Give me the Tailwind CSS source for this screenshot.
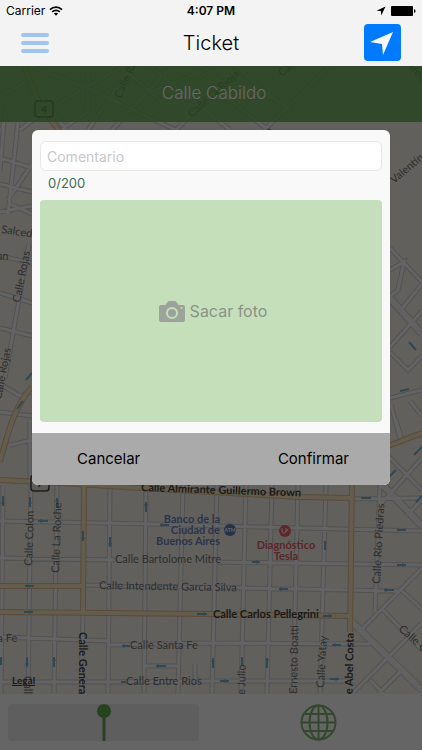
<!DOCTYPE html>
<html lang="es">
<head>
  <meta charset="UTF-8" />
  <meta name="viewport" content="width=device-width, initial-scale=1.0" />
  <title>Ticket</title>
  <script src="https://cdn.jsdelivr.net/npm/@tailwindcss/browser@4"></script>
</head>
<body class="bg-[#fcfcfc] font-['Inter','Liberation_Sans',sans-serif] text-black">
  <div class="min-h-screen flex flex-col">

    <!-- Status bar + nav bar -->
    <header class="bg-[#f3f3f3]">
      <div class="h-[22px] grid grid-cols-3 items-center px-[6px] text-xs">
        <div class="flex items-center gap-1">
          <span>Carrier</span>
          <svg class="w-[14px] h-[10px]" viewBox="0 0 14 10" fill="none" stroke="#000" stroke-width="1.7">
            <path d="M1 3.600C4.400 0.300 9.600 0.300 13 3.600" />
            <path d="M3.200 5.800C5.300 3.800 8.700 3.800 10.800 5.800" />
            <path d="M7 9.800L4.900 7.600C6.100 6.500 7.900 6.500 9.100 7.600Z" fill="#000" stroke="none" />
          </svg>
        </div>
        <span class="text-center font-semibold">4:07 PM</span>
        <div class="flex items-center justify-end gap-[5px]">
          <svg class="w-[10px] h-[10px]" viewBox="0 0 10 10"><path d="M9.500 0.500L0.500 4.700L4.900 5.100L5.300 9.500Z" /></svg>
          <svg class="w-[25px] h-[10px]" viewBox="0 0 25 10"><rect width="22" height="10" rx="1" /><path d="M23 3.200C25 3.200 25 6.800 23 6.800Z" /></svg>
        </div>
      </div>
      <nav class="h-11 grid grid-cols-3 items-center px-[21px] pb-[3px]">
        <button type="button" aria-label="Menú" class="w-7 flex flex-col gap-1">
          <span class="h-1 w-full rounded-full bg-[#9fc6f3]"></span>
          <span class="h-1 w-full rounded-full bg-[#9fc6f3]"></span>
          <span class="h-1 w-full rounded-full bg-[#9fc6f3]"></span>
        </button>
        <h1 class="text-center text-xl font-light">Ticket</h1>
        <button type="button" aria-label="Mi ubicación" class="justify-self-end w-[37px] h-[37px] rounded bg-[#007aff]">
          <svg viewBox="0 0 37 37"><path d="M29 8L6 18L18 20L19 31Z" fill="#f7f7f7" /></svg>
        </button>
      </nav>
    </header>

    <div class="relative grow flex flex-col">
      <main class="relative grow min-h-[628px] overflow-hidden bg-[#f5f0e7]">
        <svg class="absolute inset-0 w-full h-full" viewBox="0 66 422 628" preserveAspectRatio="xMidYMin slice" fill="none">
          <defs>
            <path id="streets" d="M0 521L150 524L260 527L422 531M0 558L115 560M211 562L422 565M84 585L300 589L400 591M0 637L110 641M110 645L211 643L370 644M0 682L110 682L200 681L355 681M145 666H180M195 664V681
              M3 485L1 694M31 485L28 694M57 485L54 694M110 485L108 694M146 485L144 694M183 485L178 694M217 485L212 694M246 485L241 694M272 485L267 694M298 485L293 694M326 485L320 694M380 485L375 612M83 613L81 694
              M360 631L422 568M354 692L422 623M382 609L422 650M402 591L422 609M370 680L384 694M400 672L378 694M352 499L422 498
              M380 505L422 458M396 420L403 444M384 452L422 490M407 515L422 500
              M390 248L422 282M390 270L404 262L398 290L390 296M400 311L422 284M390 347L422 311M390 352L408 370L422 356M390 398L422 390M391 405L400 438M410 401L422 416
              M4 122L0 170M0 158L32 168M18 122L8 214M0 184L32 192M10 204L32 214M32 164L8 200M0 256L32 263M29 244L5 378M0 293L32 303M0 328L32 336M0 384L20 396L32 392M0 412L32 416M30 422L30 484M0 212L32 206M10 445L32 440
              M88 66V112L60 130M30 66L88 88L150 118L176 130M88 86L125 66M88 86L38 116L20 130M132 66L88 130M0 96L30 80L66 130M172 66L112 130M240 66L176 130M272 100L236 66M150 66L230 130M150 92L215 66M330 66L264 130M250 80L290 110M8 104L2 130M186 66L268 130M120 66L160 100" />
            <path id="avenues" d="M352 622L422 690M376 478L422 526M388 296L422 334" />
            <path id="main-roads" d="M0 480L60 483L140 488L300 497L352 498M84 485L83 613M352 480L350 632M0 586H82M0 612L211 614L350 616M32 387C14 405 6 440 0 462M388 446L422 433M24 66L40 105L60 132" />
          </defs>
          <!-- casing first, then the road surface -->
          <use href="#streets" stroke="#cfcbcc" stroke-width="5" />
          <use href="#avenues" stroke="#cfcbcc" stroke-width="8" />
          <use href="#streets" stroke="#f8f7fb" stroke-width="3" />
          <use href="#avenues" stroke="#f3f2f6" stroke-width="6" />
          <use href="#main-roads" stroke="#e3b994" stroke-width="6" />
          <use href="#main-roads" stroke="#f4e9bd" stroke-width="4" />
          <!-- one-way arrows -->
          <g stroke="#78b4cc">
            <path d="M25 586h9M24 612h9M38 521h10M160 525h9M197 614h10M122 646h8M156 666h10M121 682h5M252 562h8M279 589h9M397 565h9M384 590h10M323 616h9M332 645h9M220 681h9M330 679h9M361 498h10M397 530h9M3 496v10M30 497v10M57 498v10M83 531v10M110 537v10M146 502v10M27 657v10M54 657v10M1 657v8M213 658v10M267 658v10M242 657v8M325 541v9M416 350l-7 -8M400 391l9 -2M388 478l8 -8M414 455l8 -8M416 502l6 -6M26 380l6 -7M17 409l6 -8M48 147l9 -3" stroke-width="2" />
            <path d="M41 519v4M162 523v4M28 584v4M30 610v4M204 612v4M124 644v4M158 664v4M257 560v4M281 587v4M403 563v4M386 588v4M329 614v4M335 643v4M225 679v4M336 677v4M1 503h4M28 503h4M55 501h4M81 538h4M108 544h4M144 505h4M25 664h4M52 660h4M211 661h4M265 660h4" />
          </g>
          <!-- route shields -->
          <g stroke="#4b4b4b" stroke-width="1.5">
            <rect x="35" y="101" width="18" height="16" rx="3" fill="#e8e6dc" />
            <rect x="31" y="475" width="18" height="16" rx="3" fill="#e8e6dc" />
          </g>
          <!-- street names -->
          <g class="font-['Lato','Open_Sans',sans-serif]" fill="#757575" font-size="11">
            <text x="41" y="113" font-size="10" font-weight="700" fill="#333">4</text>
            <text x="37" y="487" font-size="10" font-weight="700" fill="#333">7</text>
            <text transform="translate(121 99) rotate(-66)">Calle Rawson</text>
            <text transform="translate(192 118) rotate(-42)">Calle La Rioja</text>
            <text transform="translate(282 77) rotate(-40)">Calle</text>
            <text transform="translate(408 66) rotate(50)">Trenque</text>
            <text transform="translate(273 131) rotate(-45)" text-anchor="end">Cabildo</text>
            <text transform="translate(394 184) rotate(-40)">Valentín Gómez</text>
            <text transform="translate(1 233) rotate(8)">Salcedo</text>
            <text x="-9" y="260">San</text>
            <text transform="translate(20 303) rotate(-79)">Calle Rojas</text>
            <text transform="translate(1 400) rotate(-79)">Calle Rojas</text>
            <text transform="translate(32 566) rotate(-88)">Calle Colon</text>
            <text transform="translate(59 573) rotate(-88)">Calle La Roche</text>
            <text x="115" y="563">Calle Bartolome Mitre</text>
            <text transform="translate(99 589) rotate(1)">Calle Intendente Garcia Silva</text>
            <text x="-24" y="642">Santa Fe</text>
            <text x="130" y="649">Calle Santa Fe</text>
            <text x="126" y="685">Calle Entre Rios</text>
            <text transform="translate(24 676) rotate(90)">Calle</text>
            <text transform="translate(245 695) rotate(-89)">e Julio</text>
            <text transform="translate(297 694) rotate(-89)">Ernesto Boatti</text>
            <text transform="translate(324 688) rotate(-87)">Calle Yatay</text>
            <text transform="translate(380 584) rotate(-87)">Calle Rio Piedras</text>
            <text transform="translate(398 630) rotate(41)">Calle Castelli</text>
          </g>
          <g class="font-['Lato','Open_Sans',sans-serif]" fill="#484848" font-size="11" font-weight="700">
            <text transform="translate(141 491) rotate(2)">Calle Almirante Guillermo Brown</text>
            <text x="213" y="618">Calle Carlos Pellegrini</text>
            <text transform="translate(79 632) rotate(90)">Calle General Paz</text>
            <text transform="translate(352 726) rotate(-89)">Vicente Abel Costa</text>
          </g>
          <!-- places -->
          <g class="font-['Lato','Open_Sans',sans-serif]" font-size="11">
            <g fill="#7283b8" font-weight="700" text-anchor="end">
              <text x="220" y="523">Banco de la</text>
              <text x="220" y="534">Ciudad de</text>
              <text x="220" y="545">Buenos Aires</text>
            </g>
            <circle cx="230" cy="530" r="6" fill="#5f79b8" />
            <text x="230" y="532" font-size="5" font-weight="700" fill="#fff" text-anchor="middle">ATM</text>
            <circle cx="285" cy="531" r="6" fill="#e8626c" />
            <path d="M282 528V531C282 534 286 534 286 531V528M286 532L288 529" stroke="#fff" stroke-width="1" />
            <g fill="#e0626c" font-weight="700" text-anchor="middle">
              <text x="286" y="549">Diagnóstico</text>
              <text x="286" y="560">Tesla</text>
            </g>
          </g>
        </svg>
        <div class="relative h-14 pl-[6px] flex items-center justify-center bg-[#5fa64c]/80 text-[17px] font-light text-white">Calle Cabildo</div>
        <a href="#legal" class="absolute left-3 bottom-[6px] text-[10px] leading-4 font-['Lato','Open_Sans',sans-serif] font-bold underline text-[#484848]">Legal</a>
      </main>

      <footer class="h-14 grid grid-cols-2 gap-6 px-2 pt-[10px] pb-[9px] bg-[#fcfcfc]">
        <button type="button" aria-label="Marcador" class="flex justify-center rounded bg-[#ebebeb]">
          <svg class="w-[14px] h-[37px]" viewBox="0 0 14 37" fill="#62a64c"><circle cx="7" cy="7" r="7" /><path d="M5.500 12h3v25h-3z" /></svg>
        </button>
        <button type="button" aria-label="Mundo" class="flex justify-center rounded">
          <svg class="w-[37px] h-[37px]" viewBox="0 0 37 37" fill="none" stroke="#80b470" stroke-width="2">
            <circle cx="18.500" cy="18.500" r="17" />
            <ellipse cx="18.500" cy="18.500" rx="9" ry="17" />
            <path d="M18.500 1.500V35.500M1.500 18.500H35.500M4 10H33M4 27H33" />
          </svg>
        </button>
      </footer>

      <!-- Comment dialog -->
      <div class="absolute inset-0 bg-black/60 px-8 pt-16">
        <form role="dialog" aria-label="Comentario y foto" class="rounded-md overflow-hidden bg-[#f9f9f9]">
          <div class="px-2 py-[11px]">
            <input type="text" aria-label="Comentario" placeholder="Comentario" maxlength="200" class="block w-full h-[30px] px-[6px] rounded-md border border-[#e6e6e6] bg-white text-sm placeholder:text-[#c7c7cd]" />
            <p class="h-[29px] px-2 pb-1 flex items-center text-[13px] text-[#3d6b58]">0/200</p>
            <button type="button" class="w-full h-[222px] pl-1 rounded flex items-center justify-center gap-[5px] bg-[#c4dfba] text-base text-[#8a9388]">
              <svg class="w-[26px] h-[21px]" viewBox="0 0 26 21">
                <path d="M2 4H6.500L8.500 1Q9 0 10.200 0H15.800Q17 0 17.500 1L19.500 4H24Q26 4 26 6V19Q26 21 24 21H2Q0 21 0 19V6Q0 4 2 4Z" fill="#9ba39a" />
                <circle cx="13" cy="12" r="5" fill="none" stroke="#c4dfba" stroke-width="2" />
                <circle cx="22.500" cy="7" r="1" fill="#c4dfba" />
              </svg>
              <span>Sacar foto</span>
            </button>
          </div>
          <div class="h-[52px] flex items-center justify-between px-[41px] bg-[#aaaaaa] text-[15px]">
            <button type="button" class="px-1">Cancelar</button>
            <button type="button">Confirmar</button>
          </div>
        </form>
      </div>
    </div>
  </div>
</body>
</html>
